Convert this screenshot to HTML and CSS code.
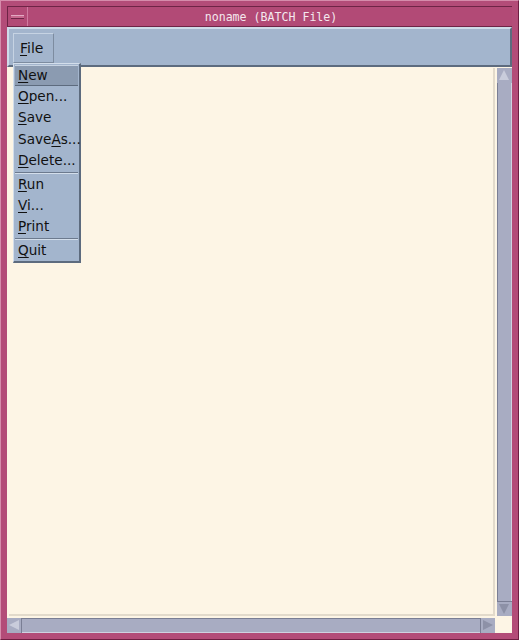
FILE: index.html
```html
<!DOCTYPE html>
<html lang="en">
<head>
    <meta charset="UTF-8">
    <title>noname (BATCH File)</title>
    <link rel="stylesheet" href="styles.css">
</head>
<body>
    <div class="frame">
        <div class="titlebar">
            <div class="winmenu"><span class="winmenu-bar"></span></div>
            <div class="title">noname (BATCH File)</div>
        </div>
        <div class="client">
            <div class="menubar">
                <div class="menubtn"><u>F</u>ile</div>
            </div>
            <div class="workarea">
                <div class="textarea"></div>
                <div class="vscroll">
                    <div class="arrow up"></div>
                    <div class="trough"></div>
                    <div class="arrow down"></div>
                </div>
                <div class="hscroll">
                    <div class="arrow left"></div>
                    <div class="trough"></div>
                    <div class="arrow right"></div>
                </div>
                <div class="corner"></div>
            </div>

            <!-- pulled-down File menu -->
            <div class="dropdown">
                <div class="item active"><u>N</u>ew</div>
                <div class="item"><u>O</u>pen...</div>
                <div class="item"><u>S</u>ave</div>
                <div class="item">Save<u>A</u>s...</div>
                <div class="item"><u>D</u>elete...</div>
                <div class="sep"></div>
                <div class="item"><u>R</u>un</div>
                <div class="item"><u>V</u>i...</div>
                <div class="item"><u>P</u>rint</div>
                <div class="sep"></div>
                <div class="item"><u>Q</u>uit</div>
            </div>
        </div>
    </div>
</body>
</html>
```

FILE: styles.css
```css
html, body {
    margin: 0;
    padding: 0;
    background: #b34c78;
}
body {
    width: 519px;
    height: 640px;
    overflow: hidden;
    font-family: "DejaVu Sans", sans-serif;
    color: #111;
}
u {
    text-decoration: underline;
    text-underline-offset: 2px;
}

/* Window frame */
.frame {
    box-sizing: border-box;
    width: 519px;
    height: 640px;
    padding: 5px 6px 6px 6px;
    background: #b34c78;
    border-top: 1px solid #d58cab;
    border-left: 1px solid #d58cab;
    border-right: 1px solid #6e1f42;
    border-bottom: 1px solid #6e1f42;
    display: flex;
    flex-direction: column;
}
.titlebar {
    height: 19px;
    border-top: 1px solid #6e2446;
    border-bottom: 1px solid #6e2446;
    border-left: 1px solid #6e2446;
    display: flex;
    align-items: center;
    background: #b24a76;
}
.winmenu {
    width: 19px;
    height: 19px;
    border-right: 1px solid #d07aa0;
    display: flex;
    align-items: center;
    justify-content: center;
}
.winmenu-bar {
    width: 13px;
    height: 2px;
    background: #c7698f;
    border-top: 1px solid #e3a9c2;
    border-bottom: 1px solid #6e2446;
}
.title {
    flex: 1;
    text-align: center;
    font-family: "DejaVu Sans Mono", monospace;
    font-size: 11.6px;
    color: #f4e8ee;
    padding-left: 2px;
}

.client {
    flex: 1;
    position: relative;
    display: flex;
    flex-direction: column;
    background: #fdf5e5;
}

/* Menu bar */
.menubar {
    height: 36px;
    background: #a3b5cd;
    border-top: 2px solid #cfdbe9;
    border-left: 2px solid #cfdbe9;
    border-right: 2px solid #5d6b7e;
    border-bottom: 2px solid #5d6b7e;
    display: flex;
    align-items: center;
    padding-left: 4px;
}
.menubtn {
    box-sizing: border-box;
    height: 30px;
    width: 41px;
    margin-top: 2px;
    border: 1px solid #c6d3e3;
    border-right-color: #7d8ca0;
    border-bottom-color: #7d8ca0;
    font-size: 14px;
    line-height: 28px;
    padding-left: 6px;
}

/* Work area with scroll bars */
.workarea {
    flex: 1;
    display: grid;
    grid-template-columns: 1fr 15px;
    grid-template-rows: 1fr 15px;
    gap: 2px;
    padding-top: 1px;
}
.textarea {
    background: #fdf5e5;
    border-right: 2px solid #e2dacb;
    border-bottom: 2px solid #e2dacb;
    margin-left: 2px;
}
.vscroll, .hscroll {
    background: #a8acc2;
    display: flex;
    box-shadow: inset 1px 1px 0 #7a7e94, inset -1px -1px 0 #cfd2e0;
}
.vscroll {
    flex-direction: column;
}
.hscroll {
    flex-direction: row;
}
.trough {
    flex: 1;
}
.arrow {
    width: 15px;
    height: 15px;
    box-sizing: border-box;
    background: #a8acc2;
    position: relative;
}
.arrow::after {
    content: "";
    position: absolute;
    width: 0;
    height: 0;
}
.arrow.up::after {
    left: 2px; top: 2px;
    border-left: 5px solid transparent;
    border-right: 5px solid transparent;
    border-bottom: 10px solid #c9ccdb;
}
.arrow.down {
    border-top: 1px solid #7a7e94;
}
.arrow.down::after {
    left: 2px; top: 2px;
    border-left: 5px solid transparent;
    border-right: 5px solid transparent;
    border-top: 10px solid #8d91a7;
}
.arrow.left {
    border-right: 1px solid #7a7e94;
}
.arrow.left::after {
    left: 2px; top: 2px;
    border-top: 5px solid transparent;
    border-bottom: 5px solid transparent;
    border-right: 10px solid #c9ccdb;
}
.arrow.right {
    border-left: 1px solid #7a7e94;
}
.arrow.right::after {
    left: 2px; top: 2px;
    border-top: 5px solid transparent;
    border-bottom: 5px solid transparent;
    border-left: 10px solid #8d91a7;
}
.corner {
    background: #fdf5e5;
}

/* Pulled-down menu */
.dropdown {
    position: absolute;
    left: 6px;
    top: 36px;
    width: 68px;
    box-sizing: border-box;
    background: #a3b5cd;
    border-top: 1px solid #d3deeb;
    border-left: 1px solid #d3deeb;
    border-right: 2px solid #5d6b7e;
    border-bottom: 2px solid #5d6b7e;
    padding: 1px 0 0 1px;
    font-size: 13.6px;
}
.item {
    height: 21.4px;
    line-height: 21px;
    padding-left: 3px;
    white-space: nowrap;
}
.item.active {
    background: #8b9bb1;
    border-top: 1px solid #c7d3e2;
    border-bottom: 1px solid #5d6b7e;
    margin-right: 1px;
    height: 19px;
    line-height: 19px;
}
.sep {
    height: 0;
    border-top: 1px solid #6c7a8e;
    border-bottom: 1px solid #d3deeb;
    margin-right: 1px;
}
```
